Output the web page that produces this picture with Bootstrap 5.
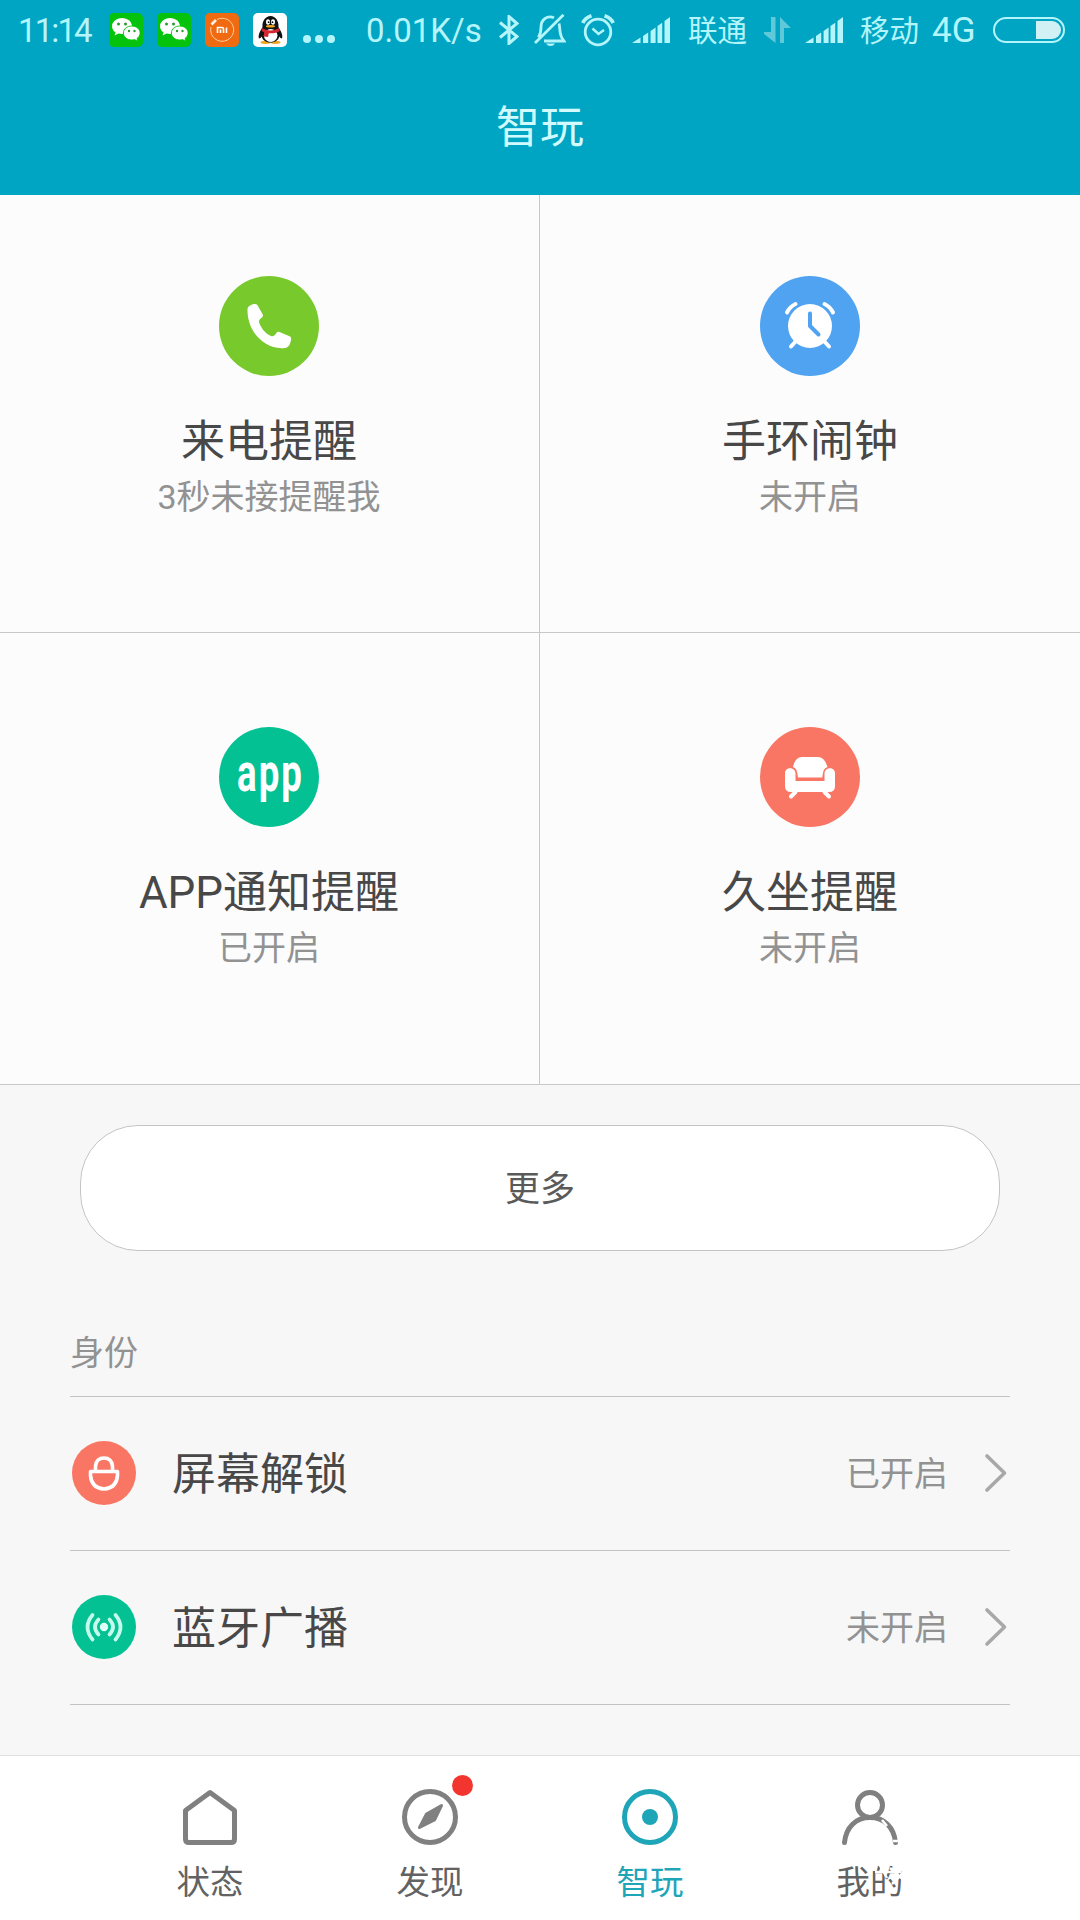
<!DOCTYPE html>
<html lang="zh-CN">
<head>
<meta charset="utf-8">
<meta name="viewport" content="width=device-width, initial-scale=1">
<title>智玩</title>
<link href="https://cdn.jsdelivr.net/npm/bootstrap@5.3.0/dist/css/bootstrap.min.css" rel="stylesheet">
<style>
body{font-family:Roboto,"Noto Sans CJK SC",sans-serif;background:#f7f7f7;color:#484848;width:1080px;height:1920px;overflow:hidden}
svg{display:block;flex:none}
.app-header{background:#00a5c3;height:195px}
.status-bar{height:60px;padding-left:18px;color:#b4f5fb;font-size:33px;line-height:60px;white-space:nowrap}
.status-bar>*{flex:none}
.status-bar>span{padding-top:2px}
.clock{width:91px;letter-spacing:-1.900px}
.carrier{font-size:29.500px}
.page-title{height:135px;line-height:137px;font-size:44px;color:#d2fbff}
.tiles{background:#fcfcfc}
.tile{border-bottom:1px solid #c8c8c8}
.tile-top{height:438px;padding-top:81px}
.tile-low{height:452px;padding-top:94px}
.tile-l{width:540px;border-right:1px solid #c8c8c8;padding-right:1px}
.tile-r{width:540px}
.tile-name{font-size:44px;line-height:60px;margin-top:36px}
.tile-note{font-size:34px;line-height:50px;color:#929292}
.more-btn{width:920px;height:126px;margin-top:40px;border:1px solid #c4c4c4;border-radius:58px;background:#fff;font-size:35px;color:#5a5a5a;padding-top:5px}
.group{padding:0 70px;margin-top:72px}
.group-name{font-size:34px;line-height:60px;color:#929292;height:74px;border-bottom:1px solid #c3c3c3}
.item-row{height:154px;border-bottom:1px solid #c3c3c3;padding:0 2px 2px}
.item-name{font-size:44px;margin-left:36px;padding-top:5px}
.item-state{font-size:34px;color:#929292;padding-top:4px}
.tabs{height:165px;margin-top:50px;background:#fff;border-top:1px solid #e0e0e0;padding:0 100px}
.tab{width:220px;padding-top:33px;color:#626262;font-size:33.5px}
.tab-label{line-height:50px;margin-top:13px}
.tab-on{color:#1fa5b8}
.unread{left:132px;top:19px;width:21px;height:21px;background:#f2352e}
.worn{left:58px;top:50px;pointer-events:none}
</style>
<script src="https://cdn.jsdelivr.net/npm/bootstrap@5.3.0/dist/js/bootstrap.bundle.min.js"></script>
</head>
<body class="d-flex flex-column">
<svg width="0" height="0" class="position-absolute">
  <symbol id="wechat" viewBox="0 0 34 34">
    <rect width="34" height="34" rx="5" fill="#05c30c"/>
    <path d="M13 5C7.500 5 3 8.700 3 13.200c0 2.500 1.400 4.700 3.600 6.200L5.500 22.500l4-2c1.100.3 2.300.5 3.500.5 5.500 0 10-3.400 10-7.900S18.500 5 13 5z" fill="#fff"/>
    <path d="M22.800 13c-4.700 0-8.400 3.100-8.400 7s3.700 7 8.400 7c1 0 2-.1 2.900-.4l3.100 1.800-.8-2.900c1.900-1.300 3.100-3.300 3.100-5.500 0-3.900-3.700-7-8.300-7z" fill="#fff" stroke="#05c30c" stroke-width=".9"/>
    <g fill="#2c9b36"><circle cx="9.500" cy="11" r="1.500"/><circle cx="16.500" cy="11" r="1.500"/><circle cx="20" cy="18" r="1.200"/><circle cx="25.500" cy="18" r="1.200"/></g>
  </symbol>
  <symbol id="signal" viewBox="0 0 38 26">
    <path d="M0 26 8.500 20.500V26zM11 19l5.200-3.400V26H11zM18.600 14l5-3.400V26h-5zM25.500 9l4.700-3.300V26h-4.700zM32.500 4 38 0v26h-5.500z" fill="#b4f5fb"/>
  </symbol>
  <symbol id="chevron" viewBox="0 0 24 40">
    <path d="M3 3 20.500 20 3 37" fill="none" stroke="#a8a8a8" stroke-width="3.600" stroke-linecap="round" stroke-linejoin="round"/>
  </symbol>
</svg>

<header class="app-header">
  <div class="status-bar d-flex align-items-center">
    <span class="clock">11:14</span>
    <svg width="34" height="34"><use href="#wechat"/></svg>
    <svg width="34" height="34" style="margin-left:14px"><use href="#wechat"/></svg>
    <svg width="34" height="34" viewBox="0 0 34 34" style="margin-left:14px">
      <rect width="34" height="34" rx="5" fill="#ef6a10"/>
      <path d="M12 6.500A11.500 11.500 0 1 1 6 14" fill="none" stroke="#ffd0a0" stroke-width="1"/>
      <path d="M6.500 11.500 11 7" stroke="#fff0e0" stroke-width="2.600"/>
      <path d="M12.500 20v-5.500h4.500q1.500 0 1.500 1.500v4M15.500 20v-3.500M21.500 14.500V20" fill="none" stroke="#fff" stroke-width="1.600"/>
    </svg>
    <svg width="34" height="34" viewBox="0 0 34 34" style="margin-left:14px">
      <rect width="34" height="34" rx="5" fill="#fff"/>
      <ellipse cx="12.500" cy="29.300" rx="5" ry="1.600" fill="#f2a51c"/><ellipse cx="22.500" cy="29.300" rx="5" ry="1.600" fill="#f2a51c"/>
      <path d="M9.500 14C8 17 4.500 22 6 25.500c1 0 2-1 2.700-2 .8 3.500 4 6 8.800 6s8-2.500 8.800-6c.7 1 1.700 2 2.700 2 1.500-3.500-2-8.500-3.500-11.500C26 8 22.500 3 17.500 3S9 8 9.500 14z" fill="#111"/>
      <ellipse cx="17.700" cy="22.500" rx="6.800" ry="6.500" fill="#fff"/>
      <path d="M9 15c5 3.200 12 3.200 17 0l.8 3c-3 2-7 2.500-11 2.200L15 24l-4.300-.5.500-4.200L8.500 18z" fill="#d32630"/>
      <ellipse cx="15" cy="9" rx="2" ry="2.800" fill="#fff"/><ellipse cx="20" cy="9" rx="2" ry="2.800" fill="#fff"/>
      <circle cx="15.600" cy="9.200" r=".9"/><circle cx="19.500" cy="9.200" r=".9"/>
      <ellipse cx="17.500" cy="13.300" rx="4.600" ry="1.200" fill="#f2a51c"/>
    </svg>
    <svg width="34" height="34" viewBox="0 0 34 34" fill="#b4f5fb" style="margin-left:15px"><circle cx="5" cy="26" r="4"/><circle cx="17" cy="26" r="4"/><circle cx="29" cy="26" r="4"/></svg>
    <span style="margin-left:30px;width:133px">0.01K/s</span>
    <svg width="20" height="30" viewBox="0 0 20 30" fill="none" stroke="#b4f5fb" stroke-width="3"><path d="M1 7.500 18 21.500 10 28.500V1.500L18 8.500 1 22.500"/></svg>
    <svg width="32" height="32" viewBox="0 0 32 32" fill="none" stroke="#b4f5fb" stroke-width="2.800" style="margin-left:15px">
      <path d="M1 29 29.500 .8M20 3.800C13 1 7 6 7 13c0 6-1 8-2.500 10.500M25 9.500c1.200 3 0 9.500 3 14.500l2 3H10"/><path d="M12 29.500h9q-1.500 2.500-4.500 2.500T12 29.500z" fill="#b4f5fb" stroke="none"/>
    </svg>
    <svg width="34" height="34" viewBox="0 0 34 34" fill="none" stroke="#b4f5fb" stroke-width="2.800" style="margin-left:15px">
      <circle cx="17" cy="19" r="12.800"/><path d="m11.500 15.500 6 5.500 5.500-4" stroke-width="2.500"/><path d="M1.800 10Q4 5 10.500 2.800M32.200 10Q30 5 23.500 2.800" stroke-width="3.600"/>
    </svg>
    <svg width="38" height="26" style="margin-left:17px"><use href="#signal"/></svg>
    <span class="carrier" style="margin-left:18px;width:76px">联通</span>
    <svg width="27" height="27" viewBox="0 0 27 27" fill="#5fc9da"><path d="M7 0h4.500v26L0 17v-2h7zM16 26h4V11h7L16 0z"/></svg>
    <svg width="38" height="26" style="margin-left:14px"><use href="#signal"/></svg>
    <span class="carrier" style="margin-left:17px;width:72px">移动</span>
    <span style="width:61px;font-size:35px">4G</span>
    <svg width="72" height="26" viewBox="0 0 72 26"><rect x="1" y="1" width="70" height="24" rx="12" fill="none" stroke="#b4f5fb" stroke-width="2"/><path d="M43 4h16a9 9 0 0 1 0 18H43z" fill="#d2f1f5"/></svg>
  </div>
  <div class="page-title text-center">智玩</div>
</header>

<main>
  <section class="tiles">
    <div class="d-flex">
      <div class="tile tile-top tile-l d-flex flex-column align-items-center">
        <svg width="100" height="100" viewBox="0 0 100 100"><circle cx="50" cy="50" r="50" fill="#78c92b"/><path d="M28.500 33c0-3 5-5 7.500-5 2 0 2.500 1 3.500 3l4 7c.8 1.500.5 2.500-.5 3.500-3 2-3.500 3.500-2.500 6 2 5 6.500 10.500 11.500 12.500 2 .8 3.500 0 5-2.500 1-1.700 2-2 4-1.300l9 3.800c2 .8 2.500 2 2 4-.8 4-2 7.500-6 8-19 2.500-38-15-37.500-39z" fill="#fff"/></svg>
        <div class="tile-name">来电提醒</div><div class="tile-note">3秒未接提醒我</div>
      </div>
      <div class="tile tile-top tile-r d-flex flex-column align-items-center">
        <svg width="100" height="100" viewBox="0 0 100 100"><circle cx="50" cy="50" r="50" fill="#4fa3f1"/><g fill="none" stroke="#fff" stroke-linecap="round" stroke-width="4"><path d="M27 36.500q3-6 8.500-8.500M73 36.500q-3-6-8.500-8.500M36 65l-5 5.500M64 65l5 5.500"/></g><circle cx="50" cy="50" r="22" fill="#fff"/><path d="M50 37.500V50l8.500 8.500" fill="none" stroke="#4fa3f1" stroke-width="4" stroke-linecap="round" stroke-linejoin="round"/></svg>
        <div class="tile-name">手环闹钟</div><div class="tile-note">未开启</div>
      </div>
    </div>
    <div class="d-flex">
      <div class="tile tile-low tile-l d-flex flex-column align-items-center">
        <svg class="overflow-visible" width="100" height="100" viewBox="0 0 100 100"><circle cx="50" cy="50" r="50" fill="#04c193"/><text x="18" y="63.500" textLength="67" lengthAdjust="spacingAndGlyphs" letter-spacing="3" font-family="Roboto" font-weight="700" font-size="54" fill="#fff">app</text></svg>
        <div class="tile-name">APP通知提醒</div><div class="tile-note">已开启</div>
      </div>
      <div class="tile tile-low tile-r d-flex flex-column align-items-center">
        <svg width="100" height="100" viewBox="0 0 100 100"><circle cx="50" cy="50" r="50" fill="#f97665"/><path d="M33 40c1-5 4-10 9-10h16c5 0 8 5 9.500 10-3 1-4 3-4.500 6l-.8 4.500H38L37.300 46c-.5-3-1.500-5-4.300-6z" fill="#fff"/><path d="M25 46c0-6.500 10-6.500 10.500 0v8h29v-8c.5-6.500 10.500-6.500 10.500 0v13q0 6-6 6H31q-6 0-6-6z" fill="#fff"/><path d="m35.500 65-4.500 4.500M64.500 65l4.500 4.500" stroke="#fff" stroke-width="4" stroke-linecap="round"/></svg>
        <div class="tile-name">久坐提醒</div><div class="tile-note">未开启</div>
      </div>
    </div>
  </section>

  <button type="button" class="more-btn d-block mx-auto">更多</button>

  <section class="group">
    <div class="group-name">身份</div>
    <div class="item-row d-flex align-items-center">
      <svg width="64" height="64" viewBox="0 0 64 64"><circle cx="32" cy="32" r="32" fill="#f97665"/><path d="M18.500 30.500h27v4q-1 12.500-13.500 13.500-12.500-1-13.500-13.500zM23.500 30v-5q1-8 8.500-8t8.500 8v5" fill="none" stroke="#fff" stroke-width="3.600" stroke-linejoin="round"/></svg>
      <span class="item-name">屏幕解锁</span><span class="item-state ms-auto">已开启</span>
      <svg width="24" height="40" style="margin-left:36px"><use href="#chevron"/></svg>
    </div>
    <div class="item-row d-flex align-items-center">
      <svg width="64" height="64" viewBox="0 0 64 64"><circle cx="32" cy="32" r="32" fill="#04c193"/><circle cx="32" cy="32" r="4.200" fill="#e0fff7"/><path d="M26.500 24.500q-7 7.500 0 15M37.500 24.500q7 7.500 0 15M20.500 20q-10 12 0 24.500M43.500 20q10 12 0 24.500" fill="none" stroke="#c5fbec" stroke-width="3.700" stroke-linecap="round"/></svg>
      <span class="item-name">蓝牙广播</span><span class="item-state ms-auto">未开启</span>
      <svg width="24" height="40" style="margin-left:36px"><use href="#chevron"/></svg>
    </div>
  </section>
</main>

<nav class="tabs d-flex">
  <div class="tab d-flex flex-column align-items-center">
    <svg width="56" height="56" viewBox="0 0 56 56" fill="none" stroke="#808080" stroke-width="5" stroke-linejoin="round"><path d="M3.500 21.500 28 3.500l24.500 18V50q0 3.500-3.500 3.500H7q-3.500 0-3.500-3.500z"/></svg>
    <div class="tab-label">状态</div>
  </div>
  <div class="tab d-flex flex-column align-items-center position-relative">
    <svg width="56" height="56" viewBox="0 0 56 56"><circle cx="28" cy="28" r="25.500" fill="none" stroke="#808080" stroke-width="5"/><path d="M39.500 16.500 32.500 31 17.500 38.500 24.500 25z" fill="#808080" stroke="#808080" stroke-width="3" stroke-linejoin="round"/></svg>
    <div class="tab-label">发现</div>
    <span class="unread position-absolute rounded-circle"></span>
  </div>
  <div class="tab tab-on d-flex flex-column align-items-center">
    <svg width="56" height="56" viewBox="0 0 56 56"><circle cx="28" cy="28" r="25.500" fill="none" stroke="#1fa5b8" stroke-width="5"/><circle cx="28" cy="28" r="8" fill="#1fa5b8"/></svg>
    <div class="tab-label">智玩</div>
  </div>
  <div class="tab d-flex flex-column align-items-center position-relative">
    <svg width="56" height="56" viewBox="0 0 56 56" fill="none" stroke="#808080" stroke-width="5" stroke-linecap="round"><circle cx="28" cy="16" r="12.500"/><path d="M2.500 53.500C4 38 14 28.500 28 28.500S52 38 53.500 53.500"/></svg>
    <div class="tab-label">我的</div>
    <svg class="worn position-absolute" width="110" height="100" viewBox="0 0 110 100" fill="none" stroke="#fff" stroke-width="2.500"><path d="M64 14l5 6M75 35h14M57 66h26M61 58l8 14M74 78l12-12M72 62l16 14"/></svg>
  </div>
</nav>
</body>
</html>
